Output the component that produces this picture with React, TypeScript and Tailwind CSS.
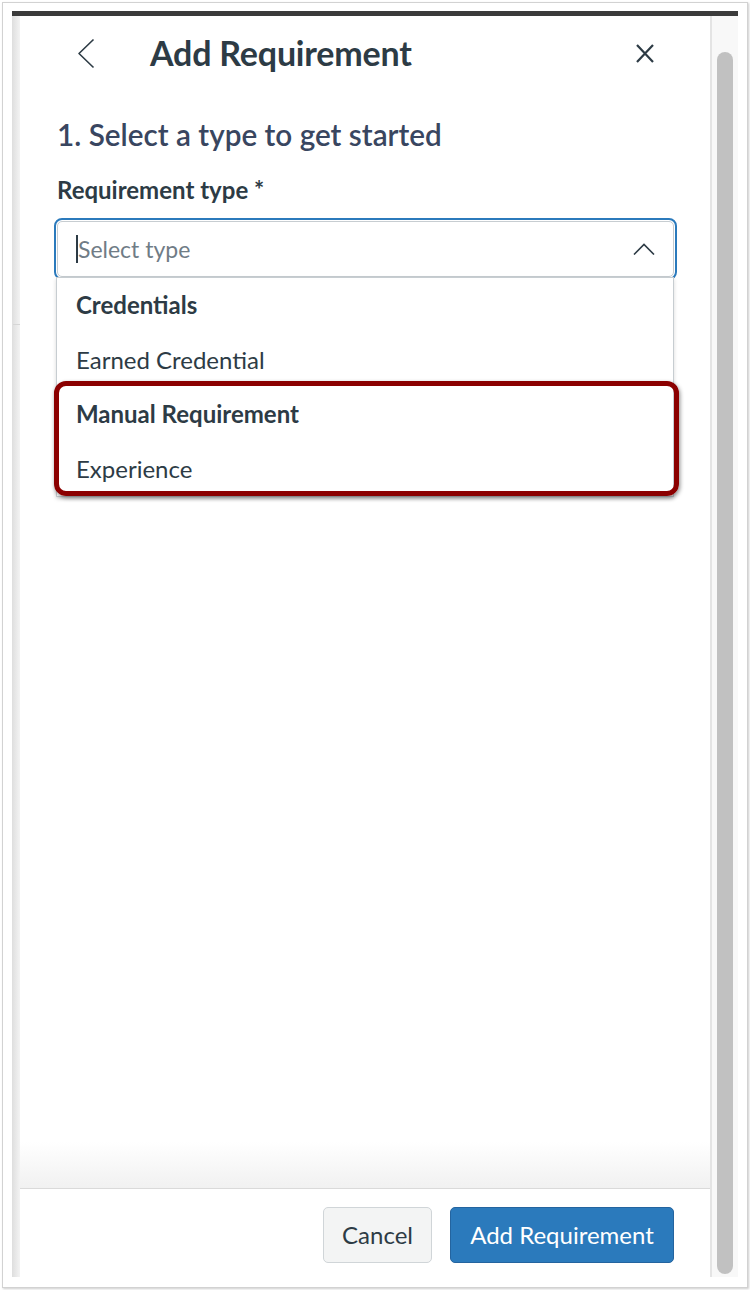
import React from "react";

function ChevronLeft() {
  return (
    <svg width="18" height="31" viewBox="0 0 18 31" fill="none">
      <path d="M16.5 1.5 L2 15.5 L16.5 29.5" stroke="#2d3b45" strokeWidth="1.6" strokeLinejoin="round" />
    </svg>
  );
}

function CloseIcon() {
  return (
    <svg width="20" height="19" viewBox="0 0 20 19" fill="none">
      <path d="M2 1 L18 18 M18 1 L2 18" stroke="#2d3b45" strokeWidth="2.2" />
    </svg>
  );
}

function ChevronUp() {
  return (
    <svg width="22" height="12" viewBox="0 0 22 12" fill="none">
      <path d="M1 11.5 L11 1.5 L21 11.5" stroke="#2d3b45" strokeWidth="1.6" />
    </svg>
  );
}

const options = [
  { label: "Credentials", group: true },
  { label: "Earned Credential", group: false },
  { label: "Manual Requirement", group: true },
  { label: "Experience", group: false },
];

export default function App() {
  return (
    <div className="w-[750px] h-[1290px] bg-white font-[Lato,'Liberation_Sans',sans-serif] text-[#2d3b45]">
      <div className="ml-[2px] mt-[2px] w-[746px] h-[1286px] border border-[#d2d2d2] bg-white pl-[9px] pt-[8px] shadow-[1px_1px_2px_rgba(0,0,0,0.2)]">
        <div className="h-[5px] w-[726px] bg-[#3b3b3b]" />
        <div className="relative flex h-[1261px] w-[726px]">
          {/* edge line behind the menu */}
          <div className="absolute left-[1px] top-[308px] h-px w-[44px] bg-[#d6d6d6]" />
          <div className="w-[8px] bg-gradient-to-r from-[#dedede] to-[#f3f3f3]" />

          <div className="relative flex w-[690px] flex-col bg-white">
            <div className="flex h-[74px] items-center pl-[57px] pr-[55px]">
              <ChevronLeft />
              <h1 className="ml-[55px] text-[34px] font-bold leading-none tracking-[-0.2px]">Add Requirement</h1>
              <div className="ml-auto">
                <CloseIcon />
              </div>
            </div>

            <div className="flex flex-1 flex-col px-[37px]">
              <h2 className="mt-[28px] text-[29.7px] font-semibold leading-[34px] text-[#394660]">
                1. Select a type to get started
              </h2>
              <p className="mt-[26px] text-[24px] font-bold leading-[24px]">Requirement type *</p>

              <div className="relative mt-[19px] w-[617px]">
                <div className="flex h-[56px] items-center rounded-[5px] border border-[#c7cdd1] bg-white pl-[18px] pr-[18px] outline-2 outline-offset-1 outline-[#2b7abc]">
                  <span className="h-[28px] w-[2px] bg-[#2d3b45]" />
                  <span className="text-[23px] text-[#707c86]">Select type</span>
                  <span className="ml-auto">
                    <ChevronUp />
                  </span>
                </div>

                <div className="absolute left-[-1px] top-[56px] w-[618px] border border-[#c7cdd1] bg-white shadow-[0_2px_4px_rgba(0,0,0,0.15)]">
                  {options.map((o) => (
                    <div
                      key={o.label}
                      className={`flex h-[54.5px] items-center pl-[19px] text-[24px] ${o.group ? "font-bold" : "font-normal"}`}
                    >
                      {o.label}
                    </div>
                  ))}
                </div>

                <div className="absolute left-[-3px] top-[160px] h-[115px] w-[625px] rounded-[12px] border-[5px] border-[#8b0000] shadow-[1px_2px_4px_rgba(0,0,0,0.45)]" />
              </div>

              <div className="flex-1" />
            </div>
            <div className="h-[46px] bg-gradient-to-b from-white to-[#f1f1f1]" />

            <div className="flex h-[89px] justify-end gap-[18px] border-t border-[#dadada] pr-[36px] pt-[18px]">
              <button className="h-[56px] w-[109px] rounded-[5px] border border-[#d0d5d8] bg-[#f3f4f4] text-[24px] text-[#2d3b45]">
                Cancel
              </button>
              <button className="h-[56px] w-[224px] rounded-[5px] border border-[#24649f] bg-[#2b7abc] text-[24px] text-white">
                Add Requirement
              </button>
            </div>
          </div>

          <div className="w-[2px] bg-[#e4e4e4]" />
          <div className="flex w-[26px] justify-center bg-[#f8f8f8] pt-[36px] pb-[3px]">
            <div className="w-[16px] rounded-full bg-[#c1c1c1]" />
          </div>
        </div>
      </div>
    </div>
  );
}
